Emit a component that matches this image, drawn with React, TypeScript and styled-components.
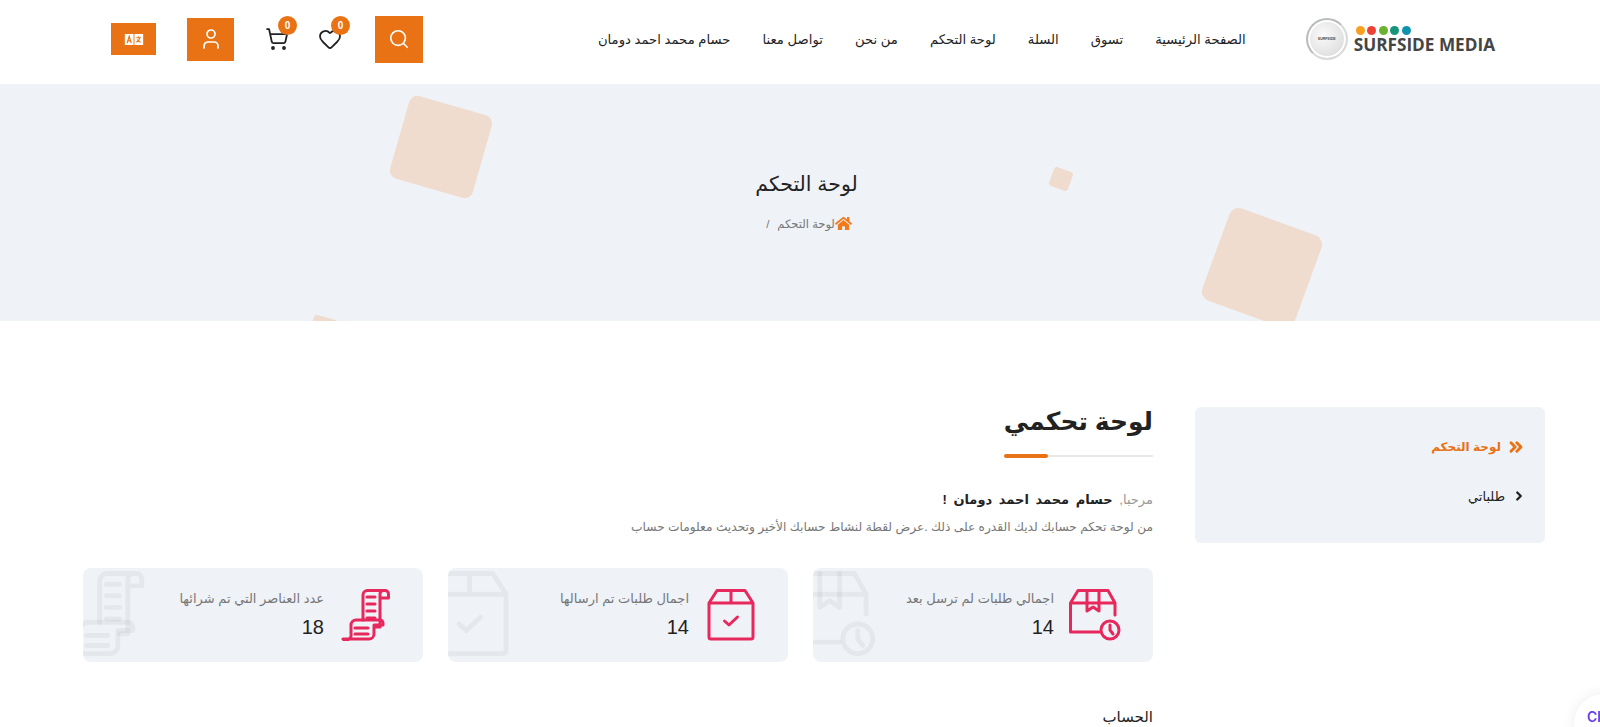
import * as React from "react";
import styled, { createGlobalStyle } from "styled-components";
import { Search, Heart, ShoppingCart, User, ChevronsRight, ChevronRight } from "lucide-react";
import { FaHome } from "react-icons/fa";

const ORANGE = "#e97314";
const PINK = "#e7285c";
const PANEL = "#eff2f7";

const NAV_LINKS = [
  "الصفحة الرئيسية",
  "تسوق",
  "السلة",
  "لوحة التحكم",
  "من نحن",
  "تواصل معنا",
  "حسام محمد احمد دومان",
];

const DOTS = ["#f6a01f", "#ee4136", "#6cb22f", "#16947c", "#0f93ac"];

const BoxClock = () => (
  <g>
    <path d="M1.5 14 9 1.5h30L46 14v12M1.5 14H46M1.5 14v29H30" />
    <path d="M18 1.5V22l6-4 6 4V1.5" />
    <circle cx="41" cy="41" r="9" />
    <path d="M41 36v5l3 4" />
  </g>
);

const BoxCheck = () => (
  <g>
    <path d="M5 14 13 1.500h28L49 14v34a2 2 0 0 1-2 2H7a2 2 0 0 1-2-2zM5 14h44M27 1.500V14" />
    <path d="m20.500 32 4.500 4 8.500-8" />
  </g>
);

const Scrolls = () => (
  <g>
    <path d="M24 31V6a4.500 4.500 0 0 1 4.500-4.500H46A3.500 3.500 0 0 1 49.500 5v4H41V5a3.500 3.500 0 0 1 3.500-3.500M41 9v29h-5" />
    <path d="M28 8h8M28 15h8M28 22h8M28 29h8" />
    <path d="M4 50h26a5 5 0 0 0 5-5v-9h9v-2a3 3 0 0 0-3-3H17a5 5 0 0 0-5 5v9a5 5 0 0 1-8 5z" />
    <path d="M16 39h13M16 45h13" />
  </g>
);

const STATS = [
  { label: "اجمالي طلبات لم ترسل بعد", value: "14", Icon: BoxClock },
  { label: "اجمال طلبات تم ارسالها", value: "14", Icon: BoxCheck },
  { label: "عدد العناصر التي تم شرائها", value: "18", Icon: Scrolls },
];

const GlobalStyle = createGlobalStyle`
  html, body {
    margin: 0;
    height: 100%;
    overflow: hidden;
    background: #fff;
  }
  body {
    font-family: "Liberation Sans", "DejaVu Sans", Arial, sans-serif;
    direction: rtl;
    color: #222;
  }
  * {
    box-sizing: border-box;
  }
`;

const Header = styled.header`
  height: 85px;
  padding: 0 105px 6px 111px;
  display: flex;
  align-items: center;
  background: #fff;
  border-bottom: 1px solid #f2f4f9;
`;

const Logo = styled.div`
  display: flex;
  align-items: center;
  gap: 6px;
  direction: ltr;
`;

const LogoRing = styled.div`
  width: 42px;
  height: 42px;
  border-radius: 50%;
  border: 2px solid #b9bcbf;
  border-right-color: #d9dadb;
  border-bottom-color: #d9dadb;
  box-shadow: inset 0 0 0 2px #fff;
  background: radial-gradient(circle at 40% 40%, #fafafa, #d4d4d4);
  display: flex;
  align-items: center;
  justify-content: center;
  font-size: 3.500px;
  font-weight: 700;
  color: #444;
  white-space: nowrap;
`;

const LogoWords = styled.div`
  display: flex;
  flex-direction: column;
  gap: 1px;
  padding-top: 2px;
`;

const LogoDots = styled.div`
  display: flex;
  gap: 2.500px;
  padding-left: 2px;
`;

const LogoDot = styled.span<{ $color: string }>`
  width: 9px;
  height: 9px;
  border-radius: 50%;
  background: ${(p) => p.$color};
`;

const LogoName = styled.span`
  font-family: "Open Sans", sans-serif;
  font-size: 17.200px;
  line-height: 18px;
  font-weight: 700;
  color: #454545;
  white-space: nowrap;
`;

const Nav = styled.nav`
  display: flex;
  gap: 32px;
  margin-right: 60px;
`;

const NavLink = styled.a`
  font-size: 13.200px;
  color: #222;
  white-space: nowrap;
`;

const Actions = styled.div`
  margin-right: auto;
  display: flex;
  align-items: center;
  gap: 31px;
`;

const SquareButton = styled.button<{ $w: number; $h: number }>`
  width: ${(p) => p.$w}px;
  height: ${(p) => p.$h}px;
  border: 0;
  padding: 0;
  background: ${ORANGE};
  color: #fff;
  display: flex;
  align-items: center;
  justify-content: center;
`;

const IconLink = styled.div`
  position: relative;
  display: flex;
  color: #222;
`;

const HeartLink = styled(IconLink)`
  margin: 0 2px 0 -2px;
`;

const Badge = styled.span`
  position: absolute;
  top: -11px;
  left: 13px;
  width: 19px;
  height: 19px;
  border-radius: 50%;
  background: ${ORANGE};
  color: #fff;
  font-size: 10px;
  font-weight: 700;
  display: flex;
  align-items: center;
  justify-content: center;
`;

const Banner = styled.section`
  position: relative;
  height: 236px;
  overflow: hidden;
  background: ${PANEL};
  display: flex;
  flex-direction: column;
  align-items: center;
  padding: 81px 0 0 13px;
`;

const Shape = styled.span<{ $x: number; $y: number; $size: number; $turn: number }>`
  position: absolute;
  left: ${(p) => p.$x}px;
  top: ${(p) => p.$y}px;
  width: ${(p) => p.$size}px;
  height: ${(p) => p.$size}px;
  border-radius: ${(p) => Math.max(3, p.$size * 0.1)}px;
  background: #efdccf;
  transform: rotate(${(p) => p.$turn}deg);
`;

const BannerTitle = styled.h1`
  margin: 0;
  font-size: 20.500px;
  line-height: 36px;
  font-weight: 400;
  color: #222;
`;

const Crumbs = styled.div`
  margin: 13px 0 0 5px;
  display: flex;
  align-items: center;
  font-size: 11.500px;
  color: #777;
`;

const CrumbHome = styled.span`
  display: flex;
  color: #f27a1a;
`;

const CrumbSlash = styled.span`
  margin-right: 8px;
`;

const Body = styled.main`
  display: flex;
  align-items: flex-start;
  gap: 42px;
  padding: 86px 55px 0 83px;
`;

const Sidebar = styled.aside`
  flex: 0 0 350px;
  height: 136px;
  padding: 29px 19px 0;
  border-radius: 6px;
  background: ${PANEL};
  display: flex;
  flex-direction: column;
  gap: 27px;
`;

const SideLink = styled.a<{ $active?: boolean }>`
  display: flex;
  align-items: center;
  gap: ${(p) => (p.$active ? "5px" : "7px")};
  height: 22px;
  font-size: ${(p) => (p.$active ? "12px" : "13px")};
  font-weight: ${(p) => (p.$active ? 700 : 400)};
  color: ${(p) => (p.$active ? ORANGE : "#222")};
`;

const Content = styled.div`
  flex: 1;
  min-width: 0;
`;

const PageTitleWrap = styled.div`
  width: fit-content;
`;

const PageTitle = styled.h2`
  margin: 0;
  font-size: 25px;
  line-height: 28px;
  font-weight: 700;
  color: #222;
`;

const TitleRule = styled.div`
  position: relative;
  height: 2px;
  margin-top: 20px;
  background: #e8e8e8;
`;

const TitleAccent = styled.span`
  position: absolute;
  left: 0;
  top: -1px;
  width: 44px;
  height: 4px;
  border-radius: 2px;
  background: ${ORANGE};
`;

const Welcome = styled.p`
  margin: 33px 0 0;
  font-size: 13px;
  line-height: 20px;
  word-spacing: 3px;
  color: #999;
`;

const WelcomeName = styled.strong`
  color: #222;
`;

const Intro = styled.p`
  margin: 7px 0 0;
  font-size: 12.200px;
  line-height: 20px;
  color: #777;
`;

const StatGrid = styled.div`
  margin-top: 31px;
  display: grid;
  grid-template-columns: repeat(3, 340px);
  justify-content: space-between;
`;

const StatCard = styled.div`
  position: relative;
  overflow: hidden;
  height: 94px;
  padding: 21px 32px 0 0;
  border-radius: 8px;
  background: ${PANEL};
  display: flex;
  gap: 15px;
`;

const StatIcon = styled.svg`
  width: 52px;
  height: 52px;
  flex: none;
  fill: none;
  stroke: ${PINK};
  stroke-width: 3;
  stroke-linecap: round;
  stroke-linejoin: round;
`;

const GhostIcon = styled.svg`
  position: absolute;
  left: -23px;
  top: 3px;
  width: 86px;
  height: 86px;
  fill: none;
  stroke: rgba(0, 0, 0, 0.045);
  stroke-width: 3;
  stroke-linecap: round;
  stroke-linejoin: round;
`;

const StatLabel = styled.div`
  font-size: 13px;
  line-height: 20px;
  color: #777;
`;

const StatValue = styled.div`
  margin-top: 6px;
  font-size: 20px;
  line-height: 24px;
  color: #222;
`;

const AccountTitle = styled.h3`
  margin: 43px 0 0;
  font-size: 15px;
  line-height: 24px;
  font-weight: 400;
  color: #222;
`;

const ChatBubble = styled.div`
  position: fixed;
  left: 1574px;
  top: 694px;
  width: 80px;
  height: 60px;
  padding: 14px 0 0 13px;
  border-radius: 30px;
  background: #fff;
  box-shadow: 0 0 14px rgba(0, 0, 0, 0.08);
  direction: ltr;
  font-family: "Inter", sans-serif;
  font-size: 14px;
  font-weight: 600;
  color: #6a3df0;
`;

const LanguageIcon = () => (
  <svg width="20" height="11" viewBox="0 0 20 12">
    <rect width="9.500" height="12" fill="#fff" />
    <rect x="10.500" width="9.500" height="12" fill="#fff" />
    <path d="M2.500 10 4.750 2.500 7 10M3.400 7.500h2.700" fill="none" stroke={ORANGE} strokeWidth="1.300" />
    <path d="M12.500 4h5M15 2.500V4M16.500 4c-.5 2.500-2 4-4 5M13.500 6c.7 1.500 2 2.600 3.800 3" fill="none" stroke={ORANGE} strokeWidth="1.100" />
  </svg>
);

const App: React.FC = () => {
  return (
    <>
      <GlobalStyle />
      <Header>
        <Logo>
          <LogoRing>SURFSIDE</LogoRing>
          <LogoWords>
            <LogoDots>
              {DOTS.map((color) => (
                <LogoDot key={color} $color={color} />
              ))}
            </LogoDots>
            <LogoName>SURFSIDE MEDIA</LogoName>
          </LogoWords>
        </Logo>
        <Nav>
          {NAV_LINKS.map((text) => (
            <NavLink key={text}>{text}</NavLink>
          ))}
        </Nav>
        <Actions>
          <SquareButton $w={48} $h={47}>
            <Search size={22} strokeWidth={1.800} />
          </SquareButton>
          <HeartLink>
            <Heart size={24} strokeWidth={1.800} />
            <Badge>0</Badge>
          </HeartLink>
          <IconLink>
            <ShoppingCart size={24} strokeWidth={1.800} />
            <Badge>0</Badge>
          </IconLink>
          <SquareButton $w={47} $h={43}>
            <User size={24} strokeWidth={1.700} />
          </SquareButton>
          <SquareButton $w={45} $h={32}>
            <LanguageIcon />
          </SquareButton>
        </Actions>
      </Header>

      <Banner>
        <Shape $x={398} $y={19} $size={86} $turn={16} />
        <Shape $x={1051} $y={84} $size={20} $turn={20} />
        <Shape $x={1213} $y={134} $size={98} $turn={20} />
        <Shape $x={311} $y={232} $size={24} $turn={15} />
        <BannerTitle>لوحة التحكم</BannerTitle>
        <Crumbs>
          <CrumbHome>
            <FaHome size={17} />
          </CrumbHome>
          لوحة التحكم
          <CrumbSlash>/</CrumbSlash>
        </Crumbs>
      </Banner>

      <Body>
        <Sidebar>
          <SideLink $active>
            <ChevronsRight size={20} strokeWidth={3.500} />
            لوحة التحكم
          </SideLink>
          <SideLink>
            <ChevronRight size={14} strokeWidth={4} />
            طلباتي
          </SideLink>
        </Sidebar>
        <Content>
          <PageTitleWrap>
            <PageTitle>لوحة تحكمي</PageTitle>
            <TitleRule>
              <TitleAccent />
            </TitleRule>
          </PageTitleWrap>
          <Welcome>
            مرحبا, <WelcomeName>حسام محمد احمد دومان !</WelcomeName>
          </Welcome>
          <Intro>
            من لوحة تحكم حسابك لديك القدره على ذلك .عرض لقطة لنشاط حسابك الأخير وتحديث معلومات حساب
          </Intro>
          <StatGrid>
            {STATS.map(({ label, value, Icon }) => (
              <StatCard key={label}>
                <GhostIcon viewBox="0 0 52 52">
                  <Icon />
                </GhostIcon>
                <StatIcon viewBox="0 0 52 52">
                  <Icon />
                </StatIcon>
                <div>
                  <StatLabel>{label}</StatLabel>
                  <StatValue>{value}</StatValue>
                </div>
              </StatCard>
            ))}
          </StatGrid>
          <AccountTitle>الحساب</AccountTitle>
        </Content>
      </Body>
      <ChatBubble>Chat</ChatBubble>
    </>
  );
};

export default App;
